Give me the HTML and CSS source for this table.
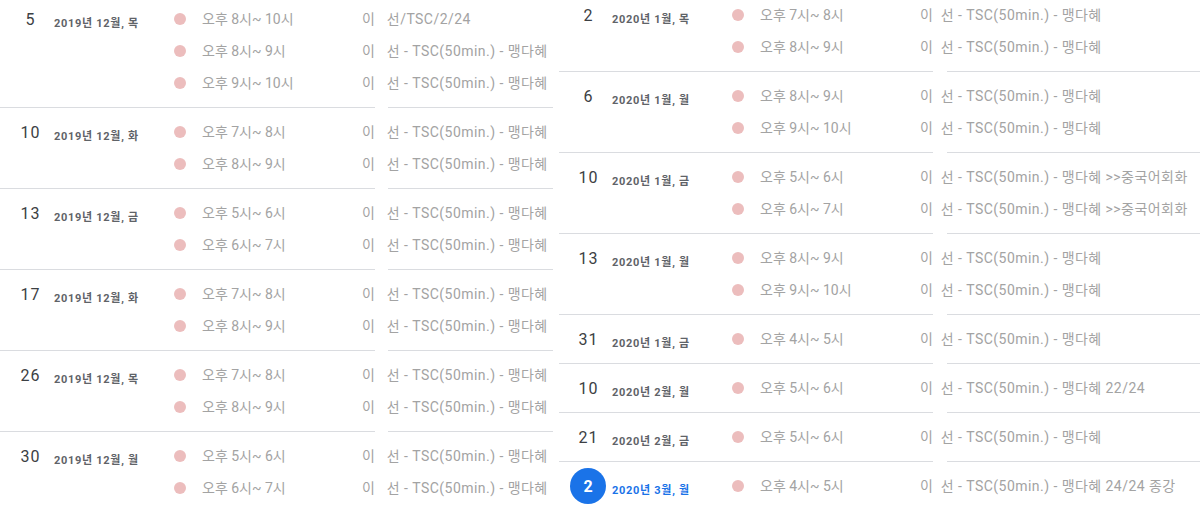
FILE: index.html
```html
<!DOCTYPE html>
<html lang="ko">
<head>
<meta charset="utf-8">
<title>일정</title>
<link rel="stylesheet" href="styles.css">
</head>
<body>
<div class="page">
  <section class="panel panel-left">
    <div class="redact"></div>

    <div class="day">
      <div class="day-num"><span>5</span></div>
      <div class="day-label">2019년 12월, 목</div>
      <div class="events">
        <div class="event"><span class="dot"></span><span class="time">오후 8시~ 10시</span><span class="title">이<span class="gap"></span>선/TSC/2/24</span></div>
        <div class="event"><span class="dot"></span><span class="time">오후 8시~ 9시</span><span class="title">이<span class="gap"></span>선 - TSC(50min.) - 맹다혜</span></div>
        <div class="event"><span class="dot"></span><span class="time">오후 9시~ 10시</span><span class="title">이<span class="gap"></span>선 - TSC(50min.) - 맹다혜</span></div>
      </div>
    </div>

    <div class="day">
      <div class="day-num"><span>10</span></div>
      <div class="day-label">2019년 12월, 화</div>
      <div class="events">
        <div class="event"><span class="dot"></span><span class="time">오후 7시~ 8시</span><span class="title">이<span class="gap"></span>선 - TSC(50min.) - 맹다혜</span></div>
        <div class="event"><span class="dot"></span><span class="time">오후 8시~ 9시</span><span class="title">이<span class="gap"></span>선 - TSC(50min.) - 맹다혜</span></div>
      </div>
    </div>

    <div class="day">
      <div class="day-num"><span>13</span></div>
      <div class="day-label">2019년 12월, 금</div>
      <div class="events">
        <div class="event"><span class="dot"></span><span class="time">오후 5시~ 6시</span><span class="title">이<span class="gap"></span>선 - TSC(50min.) - 맹다혜</span></div>
        <div class="event"><span class="dot"></span><span class="time">오후 6시~ 7시</span><span class="title">이<span class="gap"></span>선 - TSC(50min.) - 맹다혜</span></div>
      </div>
    </div>

    <div class="day">
      <div class="day-num"><span>17</span></div>
      <div class="day-label">2019년 12월, 화</div>
      <div class="events">
        <div class="event"><span class="dot"></span><span class="time">오후 7시~ 8시</span><span class="title">이<span class="gap"></span>선 - TSC(50min.) - 맹다혜</span></div>
        <div class="event"><span class="dot"></span><span class="time">오후 8시~ 9시</span><span class="title">이<span class="gap"></span>선 - TSC(50min.) - 맹다혜</span></div>
      </div>
    </div>

    <div class="day">
      <div class="day-num"><span>26</span></div>
      <div class="day-label">2019년 12월, 목</div>
      <div class="events">
        <div class="event"><span class="dot"></span><span class="time">오후 7시~ 8시</span><span class="title">이<span class="gap"></span>선 - TSC(50min.) - 맹다혜</span></div>
        <div class="event"><span class="dot"></span><span class="time">오후 8시~ 9시</span><span class="title">이<span class="gap"></span>선 - TSC(50min.) - 맹다혜</span></div>
      </div>
    </div>

    <div class="day">
      <div class="day-num"><span>30</span></div>
      <div class="day-label">2019년 12월, 월</div>
      <div class="events">
        <div class="event"><span class="dot"></span><span class="time">오후 5시~ 6시</span><span class="title">이<span class="gap"></span>선 - TSC(50min.) - 맹다혜</span></div>
        <div class="event"><span class="dot"></span><span class="time">오후 6시~ 7시</span><span class="title">이<span class="gap"></span>선 - TSC(50min.) - 맹다혜</span></div>
      </div>
    </div>
  </section>

  <section class="panel panel-right">
    <div class="redact"></div>

    <div class="day">
      <div class="day-num"><span>2</span></div>
      <div class="day-label">2020년 1월, 목</div>
      <div class="events">
        <div class="event"><span class="dot"></span><span class="time">오후 7시~ 8시</span><span class="title">이<span class="gap"></span>선 - TSC(50min.) - 맹다혜</span></div>
        <div class="event"><span class="dot"></span><span class="time">오후 8시~ 9시</span><span class="title">이<span class="gap"></span>선 - TSC(50min.) - 맹다혜</span></div>
      </div>
    </div>

    <div class="day">
      <div class="day-num"><span>6</span></div>
      <div class="day-label">2020년 1월, 월</div>
      <div class="events">
        <div class="event"><span class="dot"></span><span class="time">오후 8시~ 9시</span><span class="title">이<span class="gap"></span>선 - TSC(50min.) - 맹다혜</span></div>
        <div class="event"><span class="dot"></span><span class="time">오후 9시~ 10시</span><span class="title">이<span class="gap"></span>선 - TSC(50min.) - 맹다혜</span></div>
      </div>
    </div>

    <div class="day">
      <div class="day-num"><span>10</span></div>
      <div class="day-label">2020년 1월, 금</div>
      <div class="events">
        <div class="event"><span class="dot"></span><span class="time">오후 5시~ 6시</span><span class="title">이<span class="gap"></span>선 - TSC(50min.) - 맹다혜 &gt;&gt;중국어회화</span></div>
        <div class="event"><span class="dot"></span><span class="time">오후 6시~ 7시</span><span class="title">이<span class="gap"></span>선 - TSC(50min.) - 맹다혜 &gt;&gt;중국어회화</span></div>
      </div>
    </div>

    <div class="day">
      <div class="day-num"><span>13</span></div>
      <div class="day-label">2020년 1월, 월</div>
      <div class="events">
        <div class="event"><span class="dot"></span><span class="time">오후 8시~ 9시</span><span class="title">이<span class="gap"></span>선 - TSC(50min.) - 맹다혜</span></div>
        <div class="event"><span class="dot"></span><span class="time">오후 9시~ 10시</span><span class="title">이<span class="gap"></span>선 - TSC(50min.) - 맹다혜</span></div>
      </div>
    </div>

    <div class="day">
      <div class="day-num"><span>31</span></div>
      <div class="day-label">2020년 1월, 금</div>
      <div class="events">
        <div class="event"><span class="dot"></span><span class="time">오후 4시~ 5시</span><span class="title">이<span class="gap"></span>선 - TSC(50min.) - 맹다혜</span></div>
      </div>
    </div>

    <div class="day">
      <div class="day-num"><span>10</span></div>
      <div class="day-label">2020년 2월, 월</div>
      <div class="events">
        <div class="event"><span class="dot"></span><span class="time">오후 5시~ 6시</span><span class="title">이<span class="gap"></span>선 - TSC(50min.) - 맹다혜 22/24</span></div>
      </div>
    </div>

    <div class="day">
      <div class="day-num"><span>21</span></div>
      <div class="day-label">2020년 2월, 금</div>
      <div class="events">
        <div class="event"><span class="dot"></span><span class="time">오후 5시~ 6시</span><span class="title">이<span class="gap"></span>선 - TSC(50min.) - 맹다혜</span></div>
      </div>
    </div>

    <div class="day">
      <div class="day-num today"><span>2</span></div>
      <div class="day-label today">2020년 3월, 월</div>
      <div class="events">
        <div class="event"><span class="dot"></span><span class="time">오후 4시~ 5시</span><span class="title">이<span class="gap"></span>선 - TSC(50min.) - 맹다혜 24/24 종강</span></div>
      </div>
    </div>
  </section>
</div>
</body>
</html>
```

FILE: styles.css
```css
html, body {
  margin: 0;
  padding: 0;
  background: #fff;
}

body {
  font-family: Roboto, "Noto Sans CJK KR", sans-serif;
  color: #3c4043;
  overflow: hidden;
}

.page {
  display: flex;
  align-items: flex-start;
  height: 508px;
  overflow: hidden;
}

.panel {
  position: relative;
}

.panel-left {
  width: 553px;
  margin-top: -5px;
  --inset: 12px;
  --gap: 11.5px;
}

.panel-right {
  flex: 1;
  margin-left: 6px;
  margin-top: -9px;
  --inset: 11px;
  --gap: 7.5px;
}

.redact {
  position: absolute;
  top: 0;
  bottom: 0;
  background: #fff;
  z-index: 1;
}

.panel-left .redact {
  left: 375px;
  width: 13px;
}

.panel-right .redact {
  left: 374px;
  width: 14px;
}

.day {
  display: flex;
  align-items: flex-start;
  padding: 8px 0 8px var(--inset);
  border-bottom: 1px solid #dadce0;
}

.day > * {
  position: relative;
  z-index: 2;
}

.day-num {
  width: 36px;
  height: 32px;
  display: flex;
  align-items: center;
  justify-content: center;
  font-size: 16px;
  letter-spacing: 1px;
  color: #3c4043;
}

.day-num span {
  margin-right: -1px;
}

.day-num.today span {
  width: 36px;
  height: 36px;
  border-radius: 50%;
  background: #1a73e8;
  color: #fff;
  font-weight: 700;
  display: flex;
  align-items: center;
  justify-content: center;
  flex-shrink: 0;
  margin-right: 0;
  letter-spacing: 0;
}

.day-label {
  width: 120px;
  margin-left: 6px;
  padding-top: 13px;
  font-size: 11px;
  line-height: 16px;
  font-weight: 700;
  letter-spacing: 0.7px;
  color: #5f6368;
  white-space: nowrap;
}

.day-label.today {
  color: #1a73e8;
}

.events {
  flex: 1;
  min-width: 0;
}

.event {
  height: 32px;
  display: flex;
  align-items: center;
  white-space: nowrap;
  font-size: 14px;
  line-height: 20px;
  color: #a3a3a3;
}

.dot {
  width: 12px;
  height: 12px;
  border-radius: 50%;
  background: #ecbdbd;
  margin-right: 16px;
  flex-shrink: 0;
}

.time {
  width: 160px;
  flex-shrink: 0;
}

.title {
  flex-shrink: 0;
  letter-spacing: 0.45px;
}

.gap {
  display: inline-block;
  width: var(--gap);
}
```
